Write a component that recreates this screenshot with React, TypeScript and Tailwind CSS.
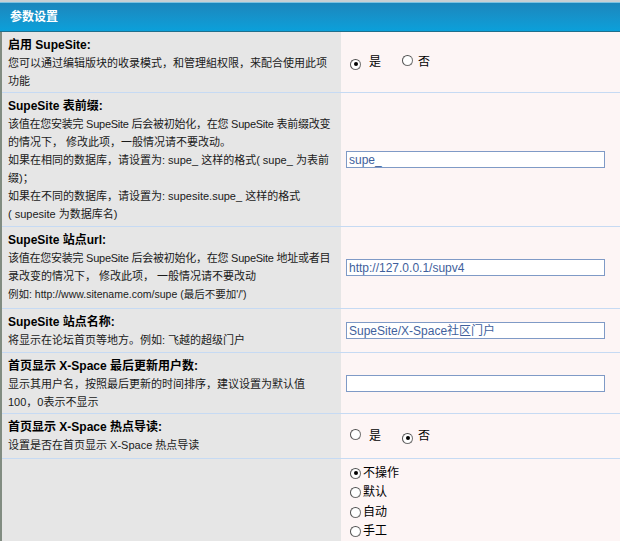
import React from "react";

const font = { fontFamily: '"Liberation Sans", "Noto Sans CJK SC", sans-serif' };

function Radio({ checked }: { checked?: boolean }) {
  return (
    <span className="relative inline-flex h-[11px] w-[11px] shrink-0 items-center justify-center rounded-full border border-[#707070] border-t-[#505050] border-l-[#505050] bg-white">
      {checked && <span className="h-[4px] w-[4px] rounded-full bg-black" />}
    </span>
  );
}

function Input({ value }: { value: string }) {
  return (
    <div className="ml-[4px] flex h-[17px] w-[259px] items-center border border-[#7f9ac6] bg-white pl-[2px] text-[12px] leading-none text-[#3f5f9c]">
      {value}
    </div>
  );
}

function Row({
  h,
  lines,
  title,
  right,
  last,
}: {
  h: string;
  title: string;
  lines: React.ReactNode[];
  right?: React.ReactNode;
  last?: boolean;
}) {
  return (
    <div className={`flex ${h} ${last ? "" : "border-b border-[#c6daf3]"}`}>
      <div className="w-[339px] shrink-0 overflow-hidden bg-[#e6e6e6] pl-[6px] pt-[4px] text-[11px] leading-[18px] text-[#1a1a1a]">
        {title && <div className="whitespace-nowrap text-[12px] font-bold text-black">{title}</div>}
        {lines.map((l, i) => (
          <div key={i} className="whitespace-nowrap">
            {l}
          </div>
        ))}
      </div>
      <div className="flex flex-1 items-center bg-[#fdf5f5] pl-[1px]">{right}</div>
    </div>
  );
}

function YesNo({ yes }: { yes: boolean }) {
  return (
    <div className="flex items-center text-[12px] text-black">
      <span className="ml-[8px]"><Radio checked={yes} /></span>
      <span className="ml-[8px]">是</span>
      <span className="ml-[21px]"><Radio checked={!yes} /></span>
      <span className="ml-[5px]">否</span>
    </div>
  );
}

export default function App() {
  return (
    <div style={font} className="h-[541px] w-[620px] overflow-hidden bg-[#e6e6e6]">
      <div className="h-[2px] bg-[#c9cfd3]" />
      <div className="flex h-[30px] items-center border-t border-[#7cc2e2] border-b border-b-[#1f6f8c] bg-gradient-to-b from-[#1b86bc] to-[#0aa0da] pl-[10px] text-[12px] font-bold text-white">
        参数设置
      </div>
      <div className="border-l-2 border-[#818c81]">
        <Row
          h="h-[61px]"
          title="启用  SupeSite:"
          lines={["您可以通过编辑版块的收录模式，和管理組权限，来配合使用此项", "功能"]}
          right={<YesNo yes={true} />}
        />
        <Row
          h="h-[134px]"
          title="SupeSite 表前缀:"
          lines={[
            <span className="tracking-[-0.25px]">该值在您安装完 SupeSite 后会被初始化，在您 SupeSite 表前缀改变</span>,
            "的情况下，  修改此项，一般情况请不要改动。",
            "如果在相同的数据库，请设置为: supe_ 这样的格式( supe_ 为表前",
            "缀)；",
            "如果在不同的数据库，请设置为: supesite.supe_ 这样的格式",
            "( supesite 为数据库名)",
          ]}
          right={<Input value="supe_" />}
        />
        <Row
          h="h-[82px]"
          title="SupeSite 站点url:"
          lines={[
            <span className="tracking-[-0.25px]">该值在您安装完 SupeSite 后会被初始化，在您 SupeSite 地址或者目</span>,
            "录改变的情况下，  修改此项，  一般情况请不要改动",
            <span className="text-[10.5px]">例如: http://www.sitename.com/supe (最后不要加'/')</span>,
          ]}
          right={<Input value="http://127.0.0.1/supv4" />}
        />
        <Row
          h="h-[44px]"
          title="SupeSite 站点名称:"
          lines={["将显示在论坛首页等地方。例如: 飞越的超级门户"]}
          right={<Input value="SupeSite/X-Space社区门户" />}
        />
        <Row
          h="h-[61px]"
          title="首页显示  X-Space 最后更新用户数:"
          lines={["显示其用户名，按照最后更新的时间排序，建议设置为默认值", "100，0表示不显示"]}
          right={<Input value="" />}
        />
        <Row
          h="h-[45px]"
          title="首页显示  X-Space 热点导读:"
          lines={["设置是否在首页显示  X-Space 热点导读"]}
          right={<YesNo yes={false} />}
        />
        <Row
          h="h-[83px]"
          title=""
          lines={[]}
          last
          right={
            <div className="ml-[8px] flex flex-col pt-[4px] text-[12px] leading-[19.5px] text-black">
              {["不操作", "默认", "自动", "手工"].map((t, i) => (
                <div key={t} className="flex items-center">
                  <Radio checked={i === 0} />
                  <span className="ml-[2px]">{t}</span>
                </div>
              ))}
            </div>
          }
        />
      </div>
    </div>
  );
}
